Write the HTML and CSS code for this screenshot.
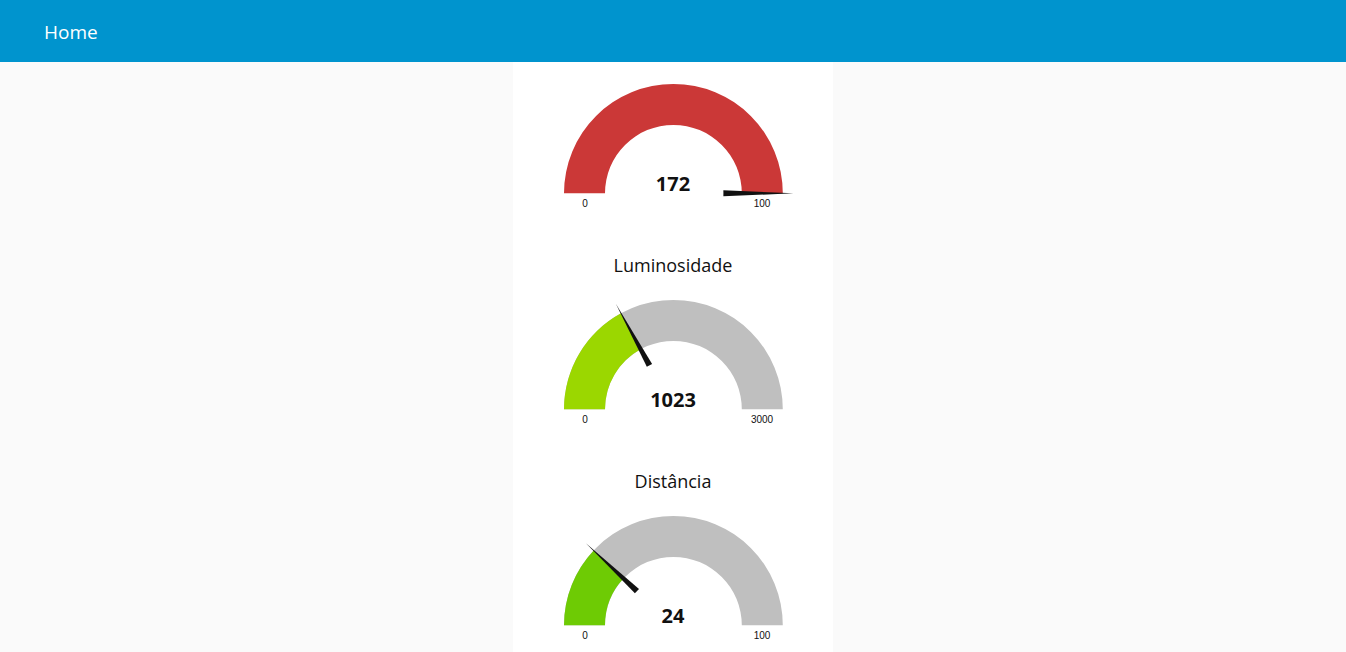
FILE: index.html
```html
<!DOCTYPE html>
<html lang="pt">
<head>
<meta charset="utf-8">
<meta name="viewport" content="width=device-width, initial-scale=1">
<title>Home</title>
<link rel="stylesheet" href="styles.css">
</head>
<body>
<header class="toolbar"><h1 class="toolbar-title">Home</h1></header>
<main class="dashboard">
  <div class="panel">
    <section class="card">
      <svg class="gauge" viewBox="0 0 320 164" role="img" aria-label="172">
        <path class="level-high" d="M51 131.3A109.4 109.4 0 0 1 269.8 131.3H228.8A68.4 68.4 0 0 0 92 131.3Z"/>
        <path class="needle" d="M40.4 131.3L110.4 128.3V134.3Z" transform="rotate(180 160.4 131.3)"/>
        <text class="value" x="160" y="129">172</text>
        <text class="limit" x="72" y="145">0</text>
        <text class="limit" x="249" y="145">100</text>
      </svg>
    </section>
    <section class="card">
      <h2 class="card-title">Luminosidade</h2>
      <svg class="gauge" viewBox="0 0 320 164" role="img" aria-label="1023">
        <path class="track" d="M51 131.3A109.4 109.4 0 0 1 269.8 131.3H228.8A68.4 68.4 0 0 0 92 131.3Z"/>
        <path class="level-medium" d="M51 131.3A109.4 109.4 0 0 1 108 35.3L127.6 71.3A68.4 68.4 0 0 0 92 131.3Z"/>
        <path class="needle" d="M40.4 131.3L110.4 128.3V134.3Z" transform="rotate(61.4 160.4 131.3)"/>
        <text class="value" x="160" y="129">1023</text>
        <text class="limit" x="72" y="145">0</text>
        <text class="limit" x="249" y="145">3000</text>
      </svg>
    </section>
    <section class="card">
      <h2 class="card-title">Distância</h2>
      <svg class="gauge" viewBox="0 0 320 164" role="img" aria-label="24">
        <path class="track" d="M51 131.3A109.4 109.4 0 0 1 269.8 131.3H228.8A68.4 68.4 0 0 0 92 131.3Z"/>
        <path class="level-low" d="M51 131.3A109.4 109.4 0 0 1 80.7 56.4L110.5 84.5A68.4 68.4 0 0 0 92 131.3Z"/>
        <path class="needle" d="M40.4 131.3L110.4 128.3V134.3Z" transform="rotate(43.2 160.4 131.3)"/>
        <text class="value" x="160" y="129">24</text>
        <text class="limit" x="72" y="145">0</text>
        <text class="limit" x="249" y="145">100</text>
      </svg>
    </section>
  </div>
</main>
</body>
</html>
```
FILE: styles.css
```css
* { box-sizing: border-box; }
body {
  margin: 0;
  height: 100vh;
  display: flex;
  flex-direction: column;
  overflow: hidden;
  background: #fafafa;
  color: #111;
  font-family: "Open Sans", sans-serif;
}
.toolbar {
  flex: none;
  padding: 17px 44px 15px;
  background: #0094ce;
  color: #fff;
}
.toolbar-title {
  margin: 0;
  font-size: 19px;
  line-height: 30px;
  font-weight: 400;
}
.dashboard {
  flex: 1;
  min-height: 0;
  display: flex;
  justify-content: center;
  overflow: hidden;
}
.panel {
  width: 100%;
  max-width: 320px;
  min-height: 100%;
  height: max-content;
  background: #fff;
}
.card-title {
  margin: 0;
  padding-top: 26px;
  font-size: 18px;
  line-height: 26px;
  font-weight: 500;
  text-align: center;
}
.gauge { display: block; width: 100%; }
.track { fill: #bfbfbf; }
.level-high { fill: #cb3837; }
.level-medium { fill: #9bd700; }
.level-low { fill: #6ecb04; }
.needle { fill: #111; }
.value {
  fill: #111;
  font-size: 20px;
  font-weight: 700;
  text-anchor: middle;
}
.limit {
  fill: #111;
  font-family: "Liberation Sans", sans-serif;
  font-size: 10px;
  text-anchor: middle;
}
```
